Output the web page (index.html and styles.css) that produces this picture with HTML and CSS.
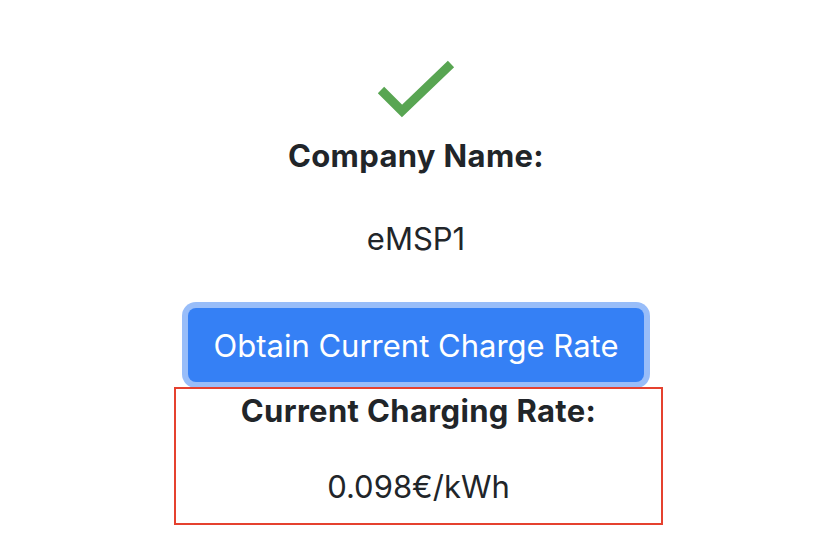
FILE: index.html
```html
<!DOCTYPE html>
<html>
<head>
<meta charset="utf-8">
<link rel="stylesheet" href="styles.css">
</head>
<body>
<main class="page">
  <svg class="check" width="84" height="68" viewBox="0 0 84 68">
    <path d="M7 34 L28 55 L77 8" fill="none" stroke="#58a552" stroke-width="9" stroke-linecap="butt" stroke-linejoin="miter"/>
  </svg>
  <h2 class="label company">Company Name:</h2>
  <p class="value company-value">eMSP1</p>
  <button class="btn">Obtain Current Charge Rate</button>
  <section class="result">
    <h2 class="label">Current Charging Rate:</h2>
    <p class="value rate">0.098€/kWh</p>
  </section>
</main>
</body>
</html>
```
FILE: styles.css
```css
html, body {
  margin: 0;
  padding: 0;
  background: #fff;
}
body {
  font-family: Inter, "Noto Sans", sans-serif;
  color: #212529;
}
.page {
  display: flex;
  flex-direction: column;
  align-items: center;
  padding-top: 56px;
  padding-left: 16px;
}
.check {
  display: block;
}
.label {
  margin: 0;
  font-size: 31px;
  font-weight: 700;
  line-height: 36px;
  letter-spacing: 0.35px;
}
.value {
  margin: 0;
  font-size: 31px;
  font-weight: 400;
  line-height: 36px;
}
.company {
  margin-top: 14px;
}
.company-value {
  margin-top: 47px;
}
.btn {
  margin-top: 51px;
  width: 456px;
  height: 74px;
  background: #3580f5;
  color: #fff;
  border: none;
  border-radius: 8px;
  box-shadow: 0 0 0 6px #98bdf9;
  font-family: inherit;
  font-size: 31px;
  padding: 0;
}
.result {
  box-sizing: border-box;
  width: 489px;
  height: 138px;
  border: 2px solid #e5412f;
  margin-top: 5px;
  margin-left: 5px;
  display: flex;
  flex-direction: column;
  align-items: center;
}
.result .label {
  margin-top: 4px;
}
.rate {
  margin-top: 40px;
}
```
